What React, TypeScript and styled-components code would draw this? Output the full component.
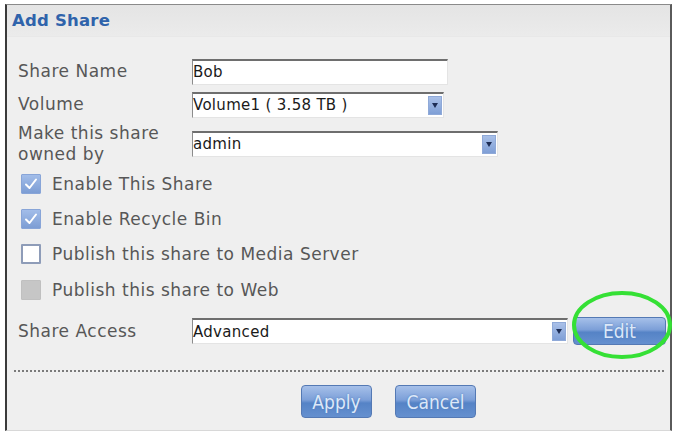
import styled, { createGlobalStyle } from 'styled-components'

const GlobalStyle = createGlobalStyle`
  html, body {
    margin: 0;
    padding: 0;
    background: #ffffff;
  }
  body {
    font-family: "DejaVu Sans", Tahoma, sans-serif;
  }
`;

const Frame = styled.div`
  position: relative;
  box-sizing: border-box;
  margin: 4px 0 0 5px;
  width: 667px;
  height: 427px;
  border-top: 1px solid #8a8a8a;
  border-left: 2px solid #3a3a3a;
  border-right: 2px solid #5a5a5a;
  border-bottom: 1px solid #d8d8d8;
  background: #efefef;
`;

const Header = styled.div`
  height: 31px;
  display: flex;
  align-items: center;
  padding-left: 5px;
  background: linear-gradient(#e4e4e4, #ebebeb);
  border-bottom: 1px solid #e8e8e8;
`;

const Title = styled.h1`
  margin: 0;
  font-size: 16.5px;
  font-weight: bold;
  color: #2f63ab;
  letter-spacing: 0.2px;
`;

const Form = styled.div`
  padding: 18px 0 0 11px;
  display: flex;
  flex-direction: column;
`;

const Row = styled.div<{ h: number }>`
  height: ${({ h }) => h}px;
  display: flex;
  align-items: center;
`;

const Label = styled.div`
  width: 174px;
  font-size: 17px;
  letter-spacing: 0.5px;
  line-height: 21px;
  color: #575757;
`;

const Field = styled.div<{ w: number }>`
  position: relative;
  box-sizing: border-box;
  width: ${({ w }) => w}px;
  height: 26px;
  display: flex;
  align-items: center;
  background: #ffffff;
  border-top: 2px solid #6e6e6e;
  border-left: 1px solid #8c8c8c;
  border-right: 1px solid #e4e4e4;
  border-bottom: 1px solid #e4e4e4;
  font-size: 15px;
  letter-spacing: 0.3px;
  color: #1a1a1a;
`;

const FieldText = styled.span`
  flex: 1;
  white-space: nowrap;
`;

const Arrow = styled.div`
  width: 14px;
  height: 19px;
  margin-right: 1px;
  display: flex;
  align-items: center;
  justify-content: center;
  background: linear-gradient(#a9c0e8, #7f9fd6);
  border: 1px solid #8fa9d8;
  box-sizing: border-box;
  &::after {
    content: '';
    border-left: 3px solid transparent;
    border-right: 3px solid transparent;
    border-top: 5px solid #1d2d55;
  }
`;

const CheckRow = styled.div<{ h: number }>`
  height: ${({ h }) => h}px;
  display: flex;
  align-items: center;
  padding-left: 3px;
  gap: 11px;
  font-size: 17px;
  letter-spacing: 0.5px;
  color: #575757;
`;

type BoxKind = 'checked' | 'empty' | 'disabled';

const Box = styled.div<{ kind: BoxKind }>`
  box-sizing: border-box;
  width: 20px;
  height: 20px;
  display: flex;
  align-items: center;
  justify-content: center;
  border-radius: 1px;
  background: ${({ kind }) =>
    kind === 'checked'
      ? 'linear-gradient(#a2bde9, #7c9dd4)'
      : kind === 'empty'
      ? '#ffffff'
      : '#c6c6c6'};
  border: ${({ kind }) =>
    kind === 'empty' ? '2px solid #8e9cb8' : kind === 'checked' ? '1px solid #88a5d8' : '1px solid #c0c0c0'};
`;

const Separator = styled.div`
  margin: 16px 6px 0 7px;
  border-top: 2px dotted #7a7a7a;
  height: 0;
`;

const Buttons = styled.div`
  display: flex;
  justify-content: center;
  gap: 23px;
  padding: 13px 0 0 100px;
`;

const Button = styled.button<{ w: number; h: number }>`
  box-sizing: border-box;
  width: ${({ w }) => w}px;
  height: ${({ h }) => h}px;
  border: 1px solid #5479b4;
  border-radius: 4px;
  background: linear-gradient(#a6c0e9 0%, #7c9fd8 45%, #5583c6 55%, #6590cf 100%);
  color: #dce8f8;
  font-family: "DejaVu Sans Condensed", "DejaVu Sans", sans-serif;
  font-stretch: condensed;
  font-size: 19px;
  padding: 0;
  text-shadow: 0 0 2px #4f7bbd;
`;

const EditWrap = styled.div`
  position: relative;
  margin-left: 5px;
`;

const Ring = styled.svg`
  position: absolute;
  left: -3px;
  top: -28px;
  pointer-events: none;
`;

const Check = () => (
  <svg width="14" height="14" viewBox="0 0 14 14">
    <path d="M2 7.5 L5.5 11 L12 2.5" fill="none" stroke="#ffffff" strokeWidth="2" strokeLinecap="round" strokeLinejoin="round" />
  </svg>
);

const checks: { text: string; kind: BoxKind; h: number }[] = [
  { text: 'Enable This Share', kind: 'checked', h: 35 },
  { text: 'Enable Recycle Bin', kind: 'checked', h: 35 },
  { text: 'Publish this share to Media Server', kind: 'empty', h: 36 },
  { text: 'Publish this share to Web', kind: 'disabled', h: 36 },
];

export default function App() {
  return (
    <>
      <GlobalStyle />
      <Frame>
        <Header>
          <Title>Add Share</Title>
        </Header>
        <Form>
          <Row h={33}>
            <Label>Share Name</Label>
            <Field w={256}>
              <FieldText>Bob</FieldText>
            </Field>
          </Row>
          <Row h={33}>
            <Label>Volume</Label>
            <Field w={252}>
              <FieldText>Volume1 ( 3.58 TB )</FieldText>
              <Arrow />
            </Field>
          </Row>
          <Row h={45}>
            <Label>
              Make this share
              <br />
              owned by
            </Label>
            <Field w={306}>
              <FieldText>admin</FieldText>
              <Arrow />
            </Field>
          </Row>
          {checks.map((c) => (
            <CheckRow key={c.text} h={c.h}>
              <Box kind={c.kind}>{c.kind === 'checked' && <Check />}</Box>
              <span>{c.text}</span>
            </CheckRow>
          ))}
          <Row h={46}>
            <Label>Share Access</Label>
            <Field w={376}>
              <FieldText>Advanced</FieldText>
              <Arrow />
            </Field>
            <EditWrap>
              <Button w={93} h={28}>Edit</Button>
              <Ring width="104" height="72" viewBox="0 0 104 72">
                <ellipse cx="52" cy="36" rx="48" ry="32" fill="none" stroke="#35e035" strokeWidth="4" />
              </Ring>
            </EditWrap>
          </Row>
        </Form>
        <Separator />
        <Buttons>
          <Button w={71} h={33}>Apply</Button>
          <Button w={81} h={33}>Cancel</Button>
        </Buttons>
      </Frame>
    </>
  )
}
